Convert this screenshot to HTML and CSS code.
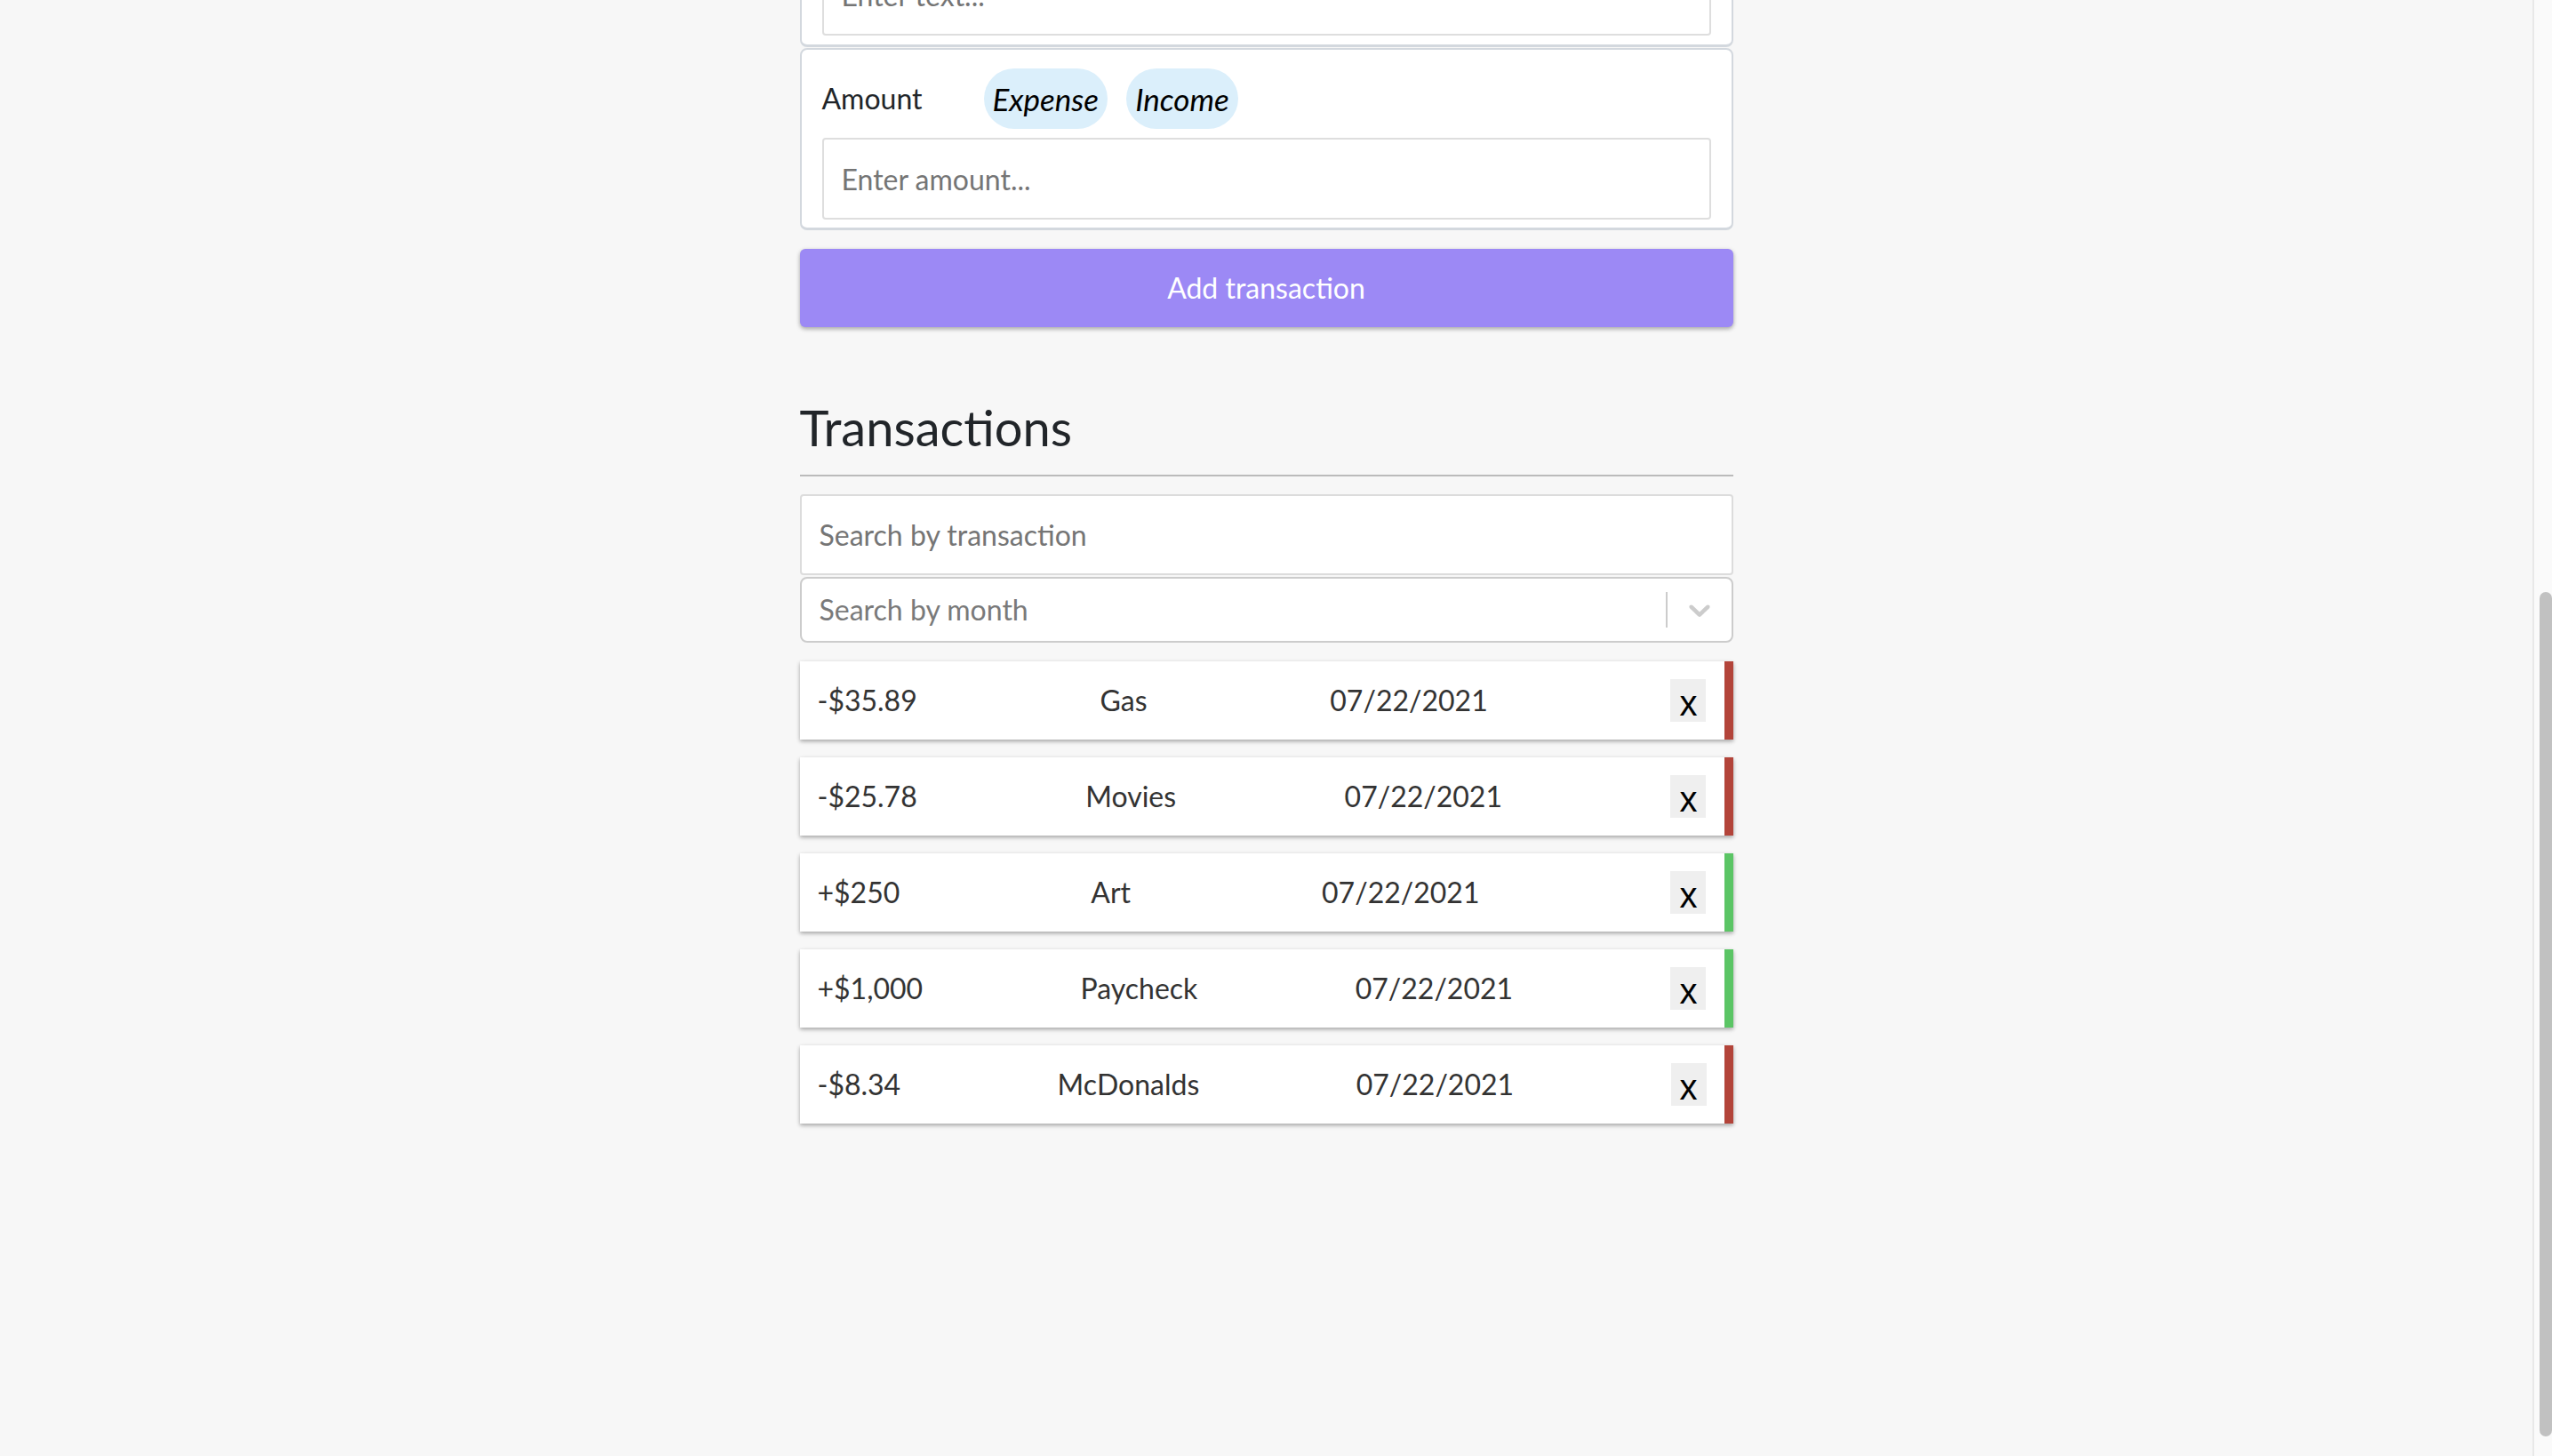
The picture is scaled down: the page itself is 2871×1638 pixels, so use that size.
FILE: index.html
```html
<!DOCTYPE html>
<html lang="en">
<head>
<meta charset="utf-8">
<title>Expense Tracker</title>
<link rel="stylesheet" href="styles.css">
</head>
<body>
<div class="viewport">
  <main class="main">
    <div class="container">
      <form class="form">
        <div class="card card-first">
          <div class="label-row"><label class="label">Text</label></div>
          <input class="field" type="text" placeholder="Enter text...">
        </div>
        <div class="card">
          <div class="label-row">
            <label class="label">Amount</label>
            <span class="pill">Expense</span>
            <span class="pill">Income</span>
          </div>
          <input class="field" type="text" placeholder="Enter amount...">
        </div>
        <button type="button" class="btn">Add transaction</button>
      </form>

      <h3 class="section-title">Transactions</h3>

      <input class="search" type="text" placeholder="Search by transaction">
      <div class="select">
        <span class="select-placeholder">Search by month</span>
        <span class="select-sep"></span>
        <span class="select-indicator">
          <svg viewBox="0 0 20 20" width="40" height="40" aria-hidden="true"><path fill="currentColor" d="M4.516 7.548c0.436-0.446 1.043-0.481 1.576 0l3.908 3.747 3.908-3.747c0.533-0.481 1.141-0.446 1.574 0 0.436 0.445 0.408 1.197 0 1.615-0.406 0.418-4.695 4.502-4.695 4.502-0.217 0.223-0.502 0.335-0.787 0.335s-0.57-0.112-0.789-0.335c0 0-4.287-4.084-4.695-4.502s-0.436-1.170 0-1.615z"/></svg>
        </span>
      </div>

      <ul class="list">
        <li class="item minus"><span>-$35.89</span><span>Gas</span><span>07/22/2021</span><button type="button" class="delete-btn">x</button></li>
        <li class="item minus"><span>-$25.78</span><span>Movies</span><span>07/22/2021</span><button type="button" class="delete-btn">x</button></li>
        <li class="item plus"><span>+$250</span><span>Art</span><span>07/22/2021</span><button type="button" class="delete-btn">x</button></li>
        <li class="item plus"><span>+$1,000</span><span>Paycheck</span><span>07/22/2021</span><button type="button" class="delete-btn">x</button></li>
        <li class="item minus"><span>-$8.34</span><span>McDonalds</span><span>07/22/2021</span><button type="button" class="delete-btn">x</button></li>
      </ul>
    </div>
  </main>
  <div class="scrollbar"><div class="scrollbar-thumb"></div></div>
</div>
</body>
</html>
```

FILE: styles.css
```css
* { box-sizing: border-box; }

html, body {
  margin: 0;
  height: 100%;
  overflow: hidden;
  background: #f7f7f7;
  font-family: Lato, "Open Sans", "Liberation Sans", sans-serif;
  color: #212529;
}

.viewport {
  display: flex;
  height: 100vh;
}

.main {
  flex: 1;
  min-width: 0;
  overflow: hidden;
}

.container {
  width: 1050px;
  margin: -153px auto 0;
}

.form { margin: 0; }

.card {
  background: #fff;
  border: 2px solid #d3d8de;
  border-bottom-width: 3px;
  border-radius: 8px;
  padding: 21px 23px 9px;
  margin-bottom: 1px;
}

.card-first { padding-bottom: 10px; }

.label-row {
  display: flex;
  align-items: center;
  height: 68px;
  margin-bottom: 10px;
}

.label {
  width: 182px;
  font-size: 32px;
  line-height: 48px;
  color: #212529;
}

.pill {
  background: #dbeffb;
  border-radius: 999px;
  padding: 10px 10px;
  font-size: 35px;
  line-height: 48px;
  font-style: italic;
  color: #000;
  margin-right: 21px;
}

.field {
  display: block;
  width: 100%;
  height: 92px;
  border: 2px solid #dedede;
  border-radius: 4px;
  padding: 20px 20px;
  font-family: inherit;
  font-size: 32px;
  line-height: 48px;
  color: #333;
  background: #fff;
  outline: none;
}

.field::placeholder, .search::placeholder {
  color: #757575;
}

.btn {
  display: block;
  width: 100%;
  height: 88px;
  margin-top: 21px;
  border: none;
  border-radius: 6px;
  background: #9c89f5;
  color: #fff;
  font-family: inherit;
  font-size: 32px;
  line-height: 48px;
  padding: 20px;
  box-shadow: 0 2px 6px rgba(0, 0, 0, 0.12), 0 2px 4px rgba(0, 0, 0, 0.24);
}

.section-title {
  margin: 79px 0 20px;
  padding-bottom: 20px;
  border-bottom: 2px solid #bbb;
  font-size: 56px;
  line-height: 1.2;
  font-weight: 400;
  color: #212529;
}

.search {
  display: block;
  width: 100%;
  height: 91px;
  margin-bottom: 2px;
  border: 2px solid #dcdcdc;
  border-radius: 4px;
  padding: 0 20px;
  font-family: inherit;
  font-size: 32px;
  line-height: 48px;
  background: #fff;
  outline: none;
}

.select {
  display: flex;
  align-items: center;
  height: 74px;
  border: 2px solid #cccccc;
  border-radius: 8px;
  background: #fff;
  padding-left: 20px;
}

.select-placeholder {
  flex: 1;
  font-size: 32px;
  line-height: 48px;
  color: #7a7a7a;
}

.select-sep {
  width: 2px;
  height: 40px;
  background: #cccccc;
}

.select-indicator {
  display: flex;
  padding: 0 16px;
  color: #cccccc;
}

.list {
  list-style: none;
  margin: 21px 0 0;
  padding: 0;
}

.item {
  display: flex;
  justify-content: space-between;
  align-items: center;
  height: 88px;
  padding: 0 20px;
  margin-bottom: 20px;
  background: #fff;
  color: #333;
  font-size: 32px;
  line-height: 48px;
  border-right: 10px solid transparent;
  box-shadow: 0 2px 6px rgba(0, 0, 0, 0.12), 0 2px 4px rgba(0, 0, 0, 0.24);
}

.item.minus { border-right-color: #b3443a; }
.item.plus { border-right-color: #5bc565; }

.delete-btn {
  display: block;
  width: 40px;
  height: 48px;
  padding: 6px 0 0;
  border: none;
  background: #efefef;
  color: #000;
  font-family: "Liberation Sans", Arial, sans-serif;
  font-size: 40px;
  line-height: 42px;
  text-align: center;
}

.scrollbar {
  flex: none;
  width: 22px;
  background: #fafafa;
  border-left: 2px solid #e8e8e8;
  padding-top: 666px;
  display: flex;
  justify-content: flex-end;
  align-items: flex-start;
}

.scrollbar-thumb {
  width: 14px;
  height: 950px;
  background: #c1c1c1;
  border-radius: 7px;
}
```
